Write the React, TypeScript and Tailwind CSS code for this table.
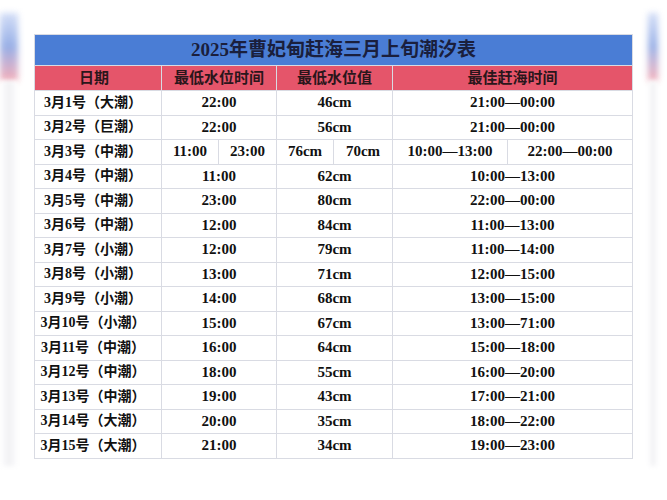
import React from "react";

type Row = { d: string; t: string; v: string; b: string } | { d: string; t: [string, string]; v: [string, string]; b: [string, string] };

const rows: Row[] = [
  { d: "3月1号（大潮）", t: "22:00", v: "46cm", b: "21:00—00:00" },
  { d: "3月2号（巨潮）", t: "22:00", v: "56cm", b: "21:00—00:00" },
  { d: "3月3号（中潮）", t: ["11:00", "23:00"], v: ["76cm", "70cm"], b: ["10:00—13:00", "22:00—00:00"] },
  { d: "3月4号（中潮）", t: "11:00", v: "62cm", b: "10:00—13:00" },
  { d: "3月5号（中潮）", t: "23:00", v: "80cm", b: "22:00—00:00" },
  { d: "3月6号（中潮）", t: "12:00", v: "84cm", b: "11:00—13:00" },
  { d: "3月7号（小潮）", t: "12:00", v: "79cm", b: "11:00—14:00" },
  { d: "3月8号（小潮）", t: "13:00", v: "71cm", b: "12:00—15:00" },
  { d: "3月9号（小潮）", t: "14:00", v: "68cm", b: "13:00—15:00" },
  { d: "3月10号（小潮）", t: "15:00", v: "67cm", b: "13:00—71:00" },
  { d: "3月11号（中潮）", t: "16:00", v: "64cm", b: "15:00—18:00" },
  { d: "3月12号（中潮）", t: "18:00", v: "55cm", b: "16:00—20:00" },
  { d: "3月13号（中潮）", t: "19:00", v: "43cm", b: "17:00—21:00" },
  { d: "3月14号（大潮）", t: "20:00", v: "35cm", b: "18:00—22:00" },
  { d: "3月15号（大潮）", t: "21:00", v: "34cm", b: "19:00—23:00" },
];

const base = "bg-white flex items-center justify-center font-bold text-[#111] leading-none";
const cell = `${base} text-[15px]`;
const dateCell = `${base} text-[14px] pr-[10px]`;

function Deco() {
  return (
    <div className="flex flex-col w-full">
      <div className="h-[68px] w-full bg-gradient-to-b from-[#c9d6f5] via-[#7f9ce0] to-[#f19aa8] blur-[3px] opacity-80" />
      <div className="h-[385px] w-full bg-gradient-to-r from-white via-[#f0f0f3] to-white blur-[2px]" />
    </div>
  );
}

export default function App() {
  return (
    <div
      className="w-full h-[500px] bg-white flex items-start"
      style={{ fontFamily: '"Liberation Serif", "Noto Sans CJK SC", serif' }}
    >
      <div className="w-[18px] mt-[13px] shrink-0">
        <Deco />
      </div>
      <div className="w-[16px] shrink-0" />
      <div className="mt-[34px] w-[599px] shrink-0 bg-[#d9dbe3] p-px grid gap-px grid-cols-[126px_56px_57px_56px_58px_114px_124px] grid-rows-[30px_24px_repeat(15,23.5px)]">
        <div className="col-span-7 bg-[#4a7dd5] flex items-center justify-center text-[19px] font-bold text-[#1a1f3d]">
          2025年曹妃甸赶海三月上旬潮汐表
        </div>
        <div className="bg-[#e5556a] flex items-center justify-center text-[15px] font-bold text-[#2a161b] pr-[8px]">日期</div>
        <div className="col-span-2 bg-[#e5556a] flex items-center justify-center text-[15px] font-bold text-[#2a161b]">最低水位时间</div>
        <div className="col-span-2 bg-[#e5556a] flex items-center justify-center text-[15px] font-bold text-[#2a161b]">最低水位值</div>
        <div className="col-span-2 bg-[#e5556a] flex items-center justify-center text-[15px] font-bold text-[#2a161b]">最佳赶海时间</div>
        {rows.map((r, i) => (
          <React.Fragment key={i}>
            <div className={dateCell}>{r.d}</div>
            {Array.isArray(r.t) ? (
              <>
                <div className={cell}>{r.t[0]}</div>
                <div className={cell}>{r.t[1]}</div>
                <div className={cell}>{(r.v as string[])[0]}</div>
                <div className={cell}>{(r.v as string[])[1]}</div>
                <div className={cell}>{(r.b as string[])[0]}</div>
                <div className={cell}>{(r.b as string[])[1]}</div>
              </>
            ) : (
              <>
                <div className={`${cell} col-span-2`}>{r.t}</div>
                <div className={`${cell} col-span-2`}>{r.v as string}</div>
                <div className={`${cell} col-span-2`}>{r.b as string}</div>
              </>
            )}
          </React.Fragment>
        ))}
      </div>
      <div className="w-[15px] shrink-0" />
      <div className="w-[10px] mt-[13px] shrink-0">
        <Deco />
      </div>
    </div>
  );
}
